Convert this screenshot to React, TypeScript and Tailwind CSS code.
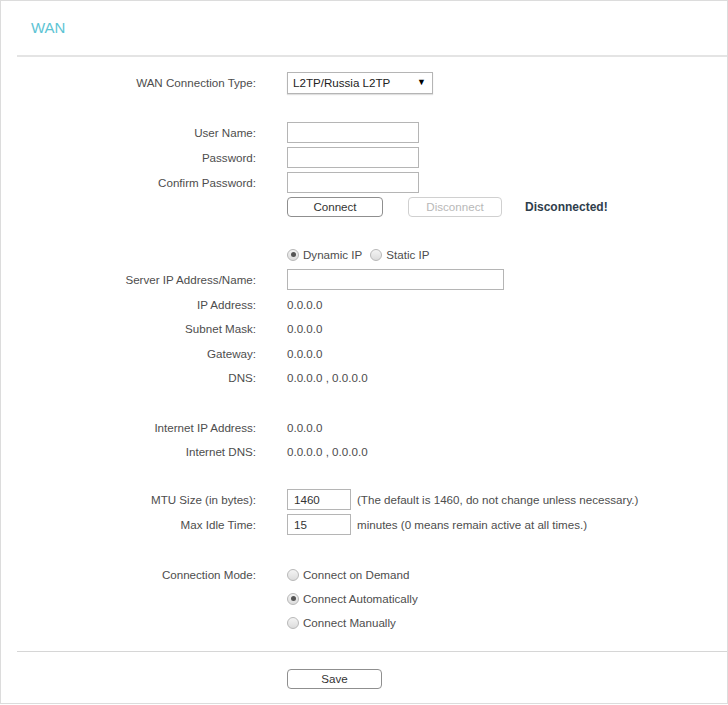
import React from 'react';

const font = "font-['Liberation_Sans',Arial,sans-serif]";
const inputClasses = "h-[21px] border border-[#b5b5b5] bg-white px-[6px] text-[11.6px] text-[#333] outline-none";
const buttonClasses = "h-[20px] rounded-[4px] border border-[#8f8f8f] bg-white text-[11.6px] text-[#333] leading-none";

const Row: React.FC<{ label?: string; h?: string; children?: React.ReactNode }> = ({ label, h = 'h-[25px]', children }) => (
  <div className={`flex items-center ${h}`}>
    <div className="w-[255px] shrink-0 text-right text-[11.6px] text-[#4d4d4d]">{label}</div>
    <div className="ml-[31px] flex items-center text-[11.6px] text-[#4d4d4d]">{children}</div>
  </div>
);

const Radio: React.FC<{ checked?: boolean; label: string }> = ({ checked, label }) => (
  <span className="flex items-center">
    <span className="flex h-[12px] w-[12px] items-center justify-center rounded-full border border-[#b8b8b8] bg-gradient-to-b from-[#f4f4f4] to-[#dcdcdc]">
      {checked && <span className="h-[5px] w-[5px] rounded-full bg-[#555]" />}
    </span>
    <span className="ml-[4px] text-[11.6px] text-[#4d4d4d]">{label}</span>
  </span>
);

export default function App() {
  return (
    <div className={`${font} h-[704px] w-[728px] border border-[#dcdcdc] bg-white`}>
      {/* Header */}
      <div className="flex h-[54px] items-center pl-[30px]">
        <span className="text-[15px] text-[#5cc4d4]">WAN</span>
      </div>
      <div className="ml-[16px] border-t-2 border-[#e4e4e4]" />

      <div className="mt-[15px]">
        <Row label="WAN Connection Type:" h="h-[22px]">
          <div className="flex h-[22px] w-[146px] items-center justify-between border border-[#b5b5b5] pl-[5px] pr-[6px] text-[11.6px] text-[#222] shadow-[0_1px_1px_rgba(0,0,0,0.12)]">
            <span>L2TP/Russia L2TP</span>
            <span className="text-[9px] text-black">▼</span>
          </div>
        </Row>
      </div>

      <div className="mt-[26px]">
        <Row label="User Name:"><input className={`${inputClasses} w-[132px]`} /></Row>
        <Row label="Password:"><input type="password" className={`${inputClasses} w-[132px]`} /></Row>
        <Row label="Confirm Password:"><input type="password" className={`${inputClasses} w-[132px]`} /></Row>
        <Row h="h-[24px]">
          <button className={`${buttonClasses} w-[96px]`}>Connect</button>
          <button disabled className={`${buttonClasses} ml-[25px] w-[94px] border-[#d0d0d0] text-[#b8b8b8]`}>Disconnect</button>
          <span className="ml-[23px] text-[12px] font-bold text-[#2f3e4c]">Disconnected!</span>
        </Row>
      </div>

      <div className="mt-[24px]">
        <Row h="h-[24px]">
          <Radio checked label="Dynamic IP" />
          <span className="ml-[8px]"><Radio label="Static IP" /></span>
        </Row>
        <Row label="Server IP Address/Name:"><input className={`${inputClasses} w-[217px]`} /></Row>
        <Row label="IP Address:" h="h-[24.5px]">0.0.0.0</Row>
        <Row label="Subnet Mask:" h="h-[24.5px]">0.0.0.0</Row>
        <Row label="Gateway:" h="h-[24.5px]">0.0.0.0</Row>
        <Row label="DNS:" h="h-[24.5px]">0.0.0.0 , 0.0.0.0</Row>
      </div>

      <div className="mt-[25px]">
        <Row label="Internet IP Address:" h="h-[24.5px]">0.0.0.0</Row>
        <Row label="Internet DNS:" h="h-[24.5px]">0.0.0.0 , 0.0.0.0</Row>
      </div>

      <div className="mt-[23px]">
        <Row label="MTU Size (in bytes):">
          <input defaultValue="1460" className={`${inputClasses} w-[64px]`} />
          <span className="ml-[6px]">(The default is 1460, do not change unless necessary.)</span>
        </Row>
        <Row label="Max Idle Time:">
          <input defaultValue="15" className={`${inputClasses} w-[64px]`} />
          <span className="ml-[6px]">minutes (0 means remain active at all times.)</span>
        </Row>
      </div>

      <div className="mt-[26px]">
        <Row label="Connection Mode:" h="h-[24px]"><Radio label="Connect on Demand" /></Row>
        <Row h="h-[24px]"><Radio checked label="Connect Automatically" /></Row>
        <Row h="h-[24px]"><Radio label="Connect Manually" /></Row>
      </div>

      <div className="ml-[16px] mt-[16px] border-t border-[#d6d6d6]" />

      <div className="mt-[17px]">
        <Row h="h-[20px]">
          <button className={`${buttonClasses} w-[95px]`}>Save</button>
        </Row>
      </div>
    </div>
  );
}
